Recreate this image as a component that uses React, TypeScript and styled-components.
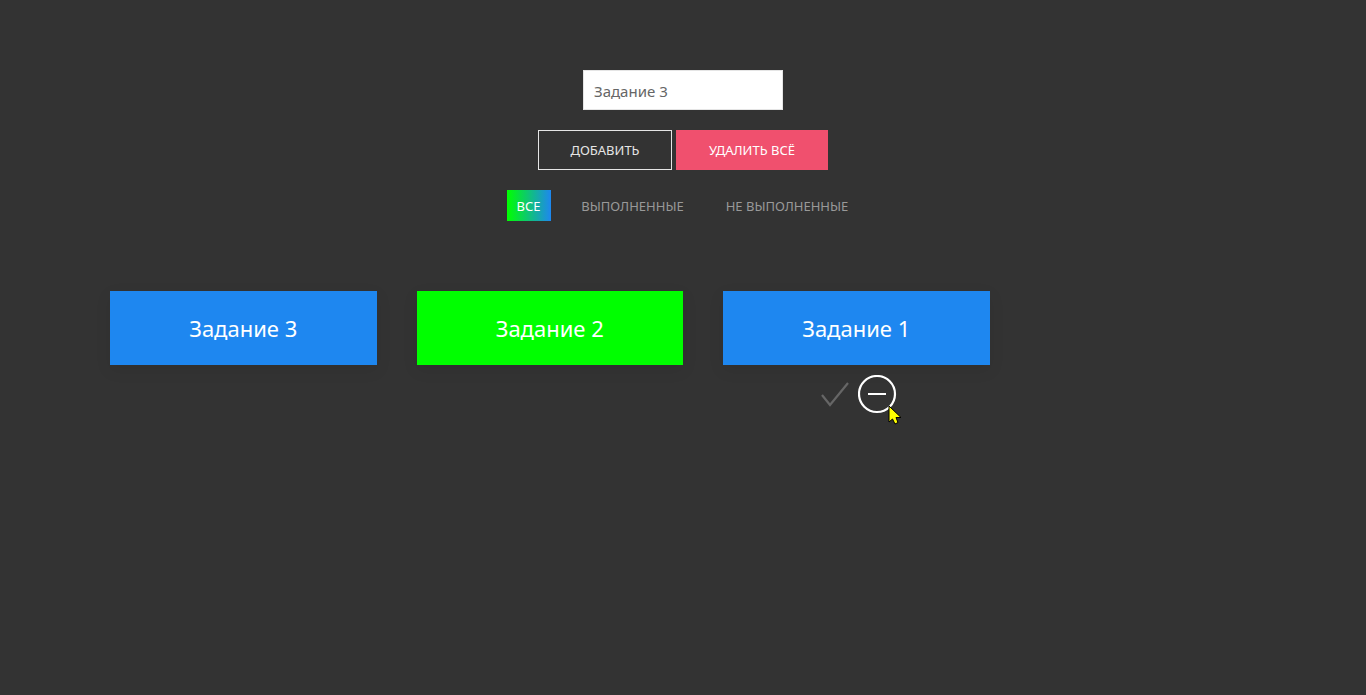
import React, { useState } from 'react';
import styled, { createGlobalStyle } from 'styled-components';

const GlobalStyle = createGlobalStyle`
  *, *::before, *::after { box-sizing: border-box; }
  body {
    margin: 0;
    background: #333;
    color: #fff;
    font-family: 'Segoe UI', 'Noto Sans', sans-serif;
    font-size: 16px;
    line-height: 24px;
  }
`;

const Page = styled.main`
  padding: 70px;
`;

const Controls = styled.form`
  display: flex;
  flex-direction: column;
  align-items: center;
  gap: 20px;
  margin-bottom: 70px;
`;

const TaskInput = styled.input`
  width: 200px;
  height: 40px;
  padding: 2px 10px 0;
  border: 1px solid #e5e5e5;
  border-radius: 0;
  outline: none;
  background: #fff;
  color: #666;
  font: inherit;
  font-size: 15px;
`;

const ButtonRow = styled.div`
  display: flex;
  gap: 4px;
`;

const Button = styled.button<{ $danger?: boolean }>`
  height: 40px;
  min-width: ${(p) => (p.$danger ? '152px' : '134px')};
  padding: 0 20px;
  border: 1px solid ${(p) => (p.$danger ? '#f0506e' : '#e5e5e5')};
  background: ${(p) => (p.$danger ? '#f0506e' : 'transparent')};
  color: ${(p) => (p.$danger ? '#fff' : '#e5e5e5')};
  font: inherit;
  font-size: 13px;
  text-transform: uppercase;
  cursor: pointer;
`;

const Filters = styled.nav`
  display: flex;
  gap: 20px;
`;

const FilterLink = styled.a<{ $active?: boolean; $width: number }>`
  min-width: ${(p) => p.$width}px;
  padding: 6px 10px 4px;
  background: ${(p) => (p.$active ? 'linear-gradient(to right, #0f0, #1e87f0)' : 'none')};
  color: ${(p) => (p.$active ? '#fff' : '#999')};
  font-size: 13px;
  line-height: 21px;
  text-align: center;
  text-decoration: none;
  text-transform: uppercase;
`;

const TaskGrid = styled.ul`
  display: grid;
  grid-template-columns: repeat(4, 1fr);
  margin: 0;
  padding: 0;
  list-style: none;
`;

const TaskItem = styled.li`
  padding-left: 40px;
`;

const TaskCard = styled.div<{ $done?: boolean }>`
  padding: 20px;
  background: ${(p) => (p.$done ? '#0f0' : '#1e87f0')};
  box-shadow: 0 5px 15px rgba(0, 0, 0, 0.08);
  font-size: 22px;
  line-height: 34px;
  text-align: center;
`;

const Actions = styled.div`
  display: flex;
  justify-content: center;
  gap: 4px;
  margin-top: 10px;
`;

const IconButton = styled.button<{ $hot?: boolean }>`
  position: relative;
  width: 40px;
  height: 40px;
  padding: 0;
  border: 0;
  background: none;
  color: ${(p) => (p.$hot ? '#fff' : '#666')};
  cursor: pointer;

  svg { display: block; }
`;

const Pointer = styled.svg`
  position: absolute;
  left: 30px;
  top: 30px;
  pointer-events: none;
`;

const tasks = [
  { id: 3, title: 'Задание 3', done: false, hovered: false },
  { id: 2, title: 'Задание 2', done: true, hovered: false },
  { id: 1, title: 'Задание 1', done: false, hovered: true },
];

const filters = [
  { name: 'Все', width: 44 },
  { name: 'Выполненные', width: 124 },
  { name: 'Не выполненные', width: 145 },
];

export default function App() {
  const [value, setValue] = useState('Задание 3');

  return (
    <Page>
      <GlobalStyle />
      <Controls onSubmit={(e) => e.preventDefault()}>
        <TaskInput aria-label="Задание" value={value} onChange={(e) => setValue(e.target.value)} />
        <ButtonRow>
          <Button type="submit">Добавить</Button>
          <Button type="button" $danger>Удалить всё</Button>
        </ButtonRow>
        <Filters>
          {filters.map(({ name, width }, i) => (
            <FilterLink key={name} href="#" $active={i === 0} $width={width}>{name}</FilterLink>
          ))}
        </Filters>
      </Controls>
      <TaskGrid>
        {tasks.map((task) => (
          <TaskItem key={task.id}>
            <TaskCard $done={task.done}>{task.title}</TaskCard>
            {task.hovered && (
              <Actions>
                <IconButton type="button" aria-label="Выполнить">
                  <svg width="40" height="40" viewBox="0 0 20 20" fill="none" stroke="currentColor" strokeWidth="1.1">
                    <polyline points="4,10 8,15 17,4" />
                  </svg>
                </IconButton>
                <IconButton type="button" aria-label="Удалить" $hot>
                  <svg width="40" height="40" viewBox="0 0 20 20" fill="none" stroke="currentColor">
                    <circle cx="9.5" cy="9.5" r="9" strokeWidth="1.1" />
                    <line x1="5" y1="9.5" x2="14" y2="9.5" />
                  </svg>
                  <Pointer width="14" height="20" viewBox="0 0 14 20">
                    <path d="M1 1V17L4.500 14L7 19L10 17.500L8 12.500H13Z" fill="#ff0" stroke="#000" />
                  </Pointer>
                </IconButton>
              </Actions>
            )}
          </TaskItem>
        ))}
      </TaskGrid>
    </Page>
  );
}
